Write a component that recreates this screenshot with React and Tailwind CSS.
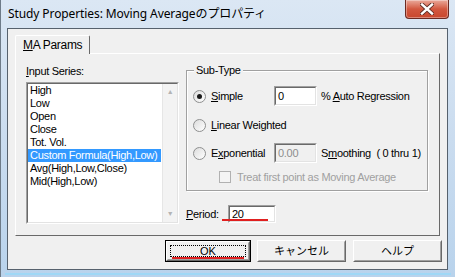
import React from 'react';

const items = [
  'High',
  'Low',
  'Open',
  'Close',
  'Tot. Vol.',
  'Custom Formula(High,Low)',
  'Avg(High,Low,Close)',
  'Mid(High,Low)',
];

// sunken classic edit box
const Sunken = ({ className = '', inner = '', children }) => (
  <div className={`border border-t-[#a0a0a0] border-l-[#a0a0a0] border-r-white border-b-white ${className}`}>
    <div className={`h-full border border-t-[#696969] border-l-[#696969] border-r-[#e3e3e3] border-b-[#e3e3e3] ${inner}`}>
      {children}
    </div>
  </div>
);

const Radio = ({ checked }) => (
  <div className="w-[13px] h-[13px] rounded-full border border-[#8e8f8f] bg-gradient-to-br from-[#dcdcdc] to-white flex items-center justify-center shrink-0">
    {checked && <div className="w-[5px] h-[5px] rounded-full bg-[#1a1a1a]" />}
  </div>
);

const Button = ({ children, def, className = '' }) => (
  <div className={`h-[22px] ${def ? 'border border-black' : ''} ${className}`}>
    <div className="h-full border border-t-white border-l-white border-r-[#696969] border-b-[#696969] bg-[#f0f0f0]">
      <div className="h-full border border-t-[#f0f0f0] border-l-[#f0f0f0] border-r-[#a0a0a0] border-b-[#a0a0a0] flex items-center justify-center p-[2px]">
        <div className={`w-full h-full flex items-center justify-center ${def ? 'border border-dotted border-black' : ''}`}>
          {children}
        </div>
      </div>
    </div>
  </div>
);

export default function App() {
  return (
    <div className="w-[455px] h-[277px] flex flex-col bg-gradient-to-b from-[#dbe7f4] via-[#cadcef] to-[#b9d3ec] border-l border-[#6e7b88] font-['Liberation_Sans','Noto_Sans_CJK_JP',sans-serif] text-[11px] text-black tracking-[-0.3px] overflow-hidden">
      {/* title bar */}
      <div className="h-[28px] flex items-start shrink-0">
        <div className="pl-[7px] pt-[6px] text-[12px] leading-[16px] tracking-[-0.1px] font-['Noto_Sans','Noto_Sans_CJK_JP',sans-serif] text-black flex-1">
          Study Properties: Moving Averageのプロパティ
        </div>
        <div className="w-[44px] h-[19px] mr-[6px] rounded-b-[4px] border border-t-0 border-[#6b2a22] bg-gradient-to-b from-[#e9a99b] via-[#d2573f] to-[#c8472d] flex items-center justify-center shadow-[inset_0_0_0_1px_rgba(255,255,255,0.35)]">
          <svg width="14" height="12" viewBox="0 0 14 12">
            <path d="M2 1.5 L12 10.5 M12 1.5 L2 10.5" stroke="#5a2a22" strokeWidth="4.2" strokeLinecap="square" />
            <path d="M2 1.5 L12 10.5 M12 1.5 L2 10.5" stroke="#ffffff" strokeWidth="2.4" strokeLinecap="square" />
          </svg>
        </div>
      </div>

      {/* client area */}
      <div className="mx-[6px] w-[441px] h-[242px] border border-[#56616d] bg-[#f0f0f0] flex flex-col shrink-0">
        {/* tab header */}
        <div className="pl-[7px] pt-[6px] flex">
          <div className="w-[75px] h-[19px] border border-b-0 border-t-white border-l-white border-r-[#696969] rounded-tl-[2px] rounded-tr-[2px] flex items-center pl-[7px] text-[12px] leading-[14px] -mb-px relative bg-[#f0f0f0]">
            <span className="underline underline-offset-[1px]">M</span>A Params
          </div>
        </div>

        {/* tab panel */}
        <div className="ml-[7px] w-[425px] h-[183px] border border-t-white border-l-white border-r-[#696969] border-b-[#696969] flex">
          {/* input series */}
          <div className="pl-[10px] pt-[10px] flex flex-col">
            <div className="leading-[14px] h-[14px]">
              <span className="underline underline-offset-[1px]">I</span>nput Series:
            </div>
            <Sunken className="mt-[4px] w-[153px] h-[142px]" inner="bg-white flex">
              <div className="flex-1 flex flex-col">
                {items.map((t, i) => (
                  <div
                    key={i}
                    className={`h-[13px] leading-[13px] pl-[2px] whitespace-nowrap ${i === 5 ? 'bg-[#3399ff] text-white w-[133px]' : ''}`}
                  >
                    {t}
                  </div>
                ))}
              </div>
              <div className="w-[15px] bg-[#f3f3f3] border-l border-[#e6e6e6] flex flex-col justify-between items-center py-[4px] text-[7px] leading-[8px] text-[#b4b4b4]">
                <span>▲</span>
                <span>▼</span>
              </div>
            </Sunken>
          </div>

          {/* sub-type + period */}
          <div className="ml-[7px] pt-[16px] flex flex-col">
            <div className="w-[242px] h-[121px] border border-[#a0a0a0] shadow-[inset_1px_1px_0_#fff,1px_1px_0_#fff] flex flex-col">
              <div className="-mt-[8px] ml-[7px] w-fit px-[2px] bg-[#f0f0f0] leading-[14px] h-[14px]">Sub-Type</div>

              <div className="mt-[9px] h-[20px] flex items-center pl-[6px]">
                <Radio checked />
                <div className="ml-[5px] w-[63px]">
                  <span className="underline underline-offset-[1px]">S</span>imple
                </div>
                <Sunken className="w-[43px] h-[20px]" inner="bg-white flex items-center pl-[2px]">0</Sunken>
                <div className="ml-[4px]">
                  % <span className="underline underline-offset-[1px]">A</span>uto Regression
                </div>
              </div>

              <div className="mt-[9px] h-[20px] flex items-center pl-[6px]">
                <Radio />
                <div className="ml-[5px]">
                  <span className="underline underline-offset-[1px]">L</span>inear Weighted
                </div>
              </div>

              <div className="mt-[8px] h-[20px] flex items-center pl-[6px]">
                <Radio />
                <div className="ml-[5px] w-[63px]">
                  E<span className="underline underline-offset-[1px]">x</span>ponential
                </div>
                <Sunken className="w-[43px] h-[20px]" inner="bg-[#f0f0f0] text-[#8d8d8d] flex items-center pl-[2px]">0.00</Sunken>
                <div className="ml-[4px]">
                  S<span className="underline underline-offset-[1px]">m</span>oothing&nbsp; ( 0 thru 1)
                </div>
              </div>

              <div className="mt-[8px] h-[12px] flex items-center pl-[32px]">
                <div className="w-[12px] h-[12px] border border-[#b1b1b1] bg-[#f4f4f4] shrink-0" />
                <div className="ml-[6px] text-[#a0a0a0]">Treat first point as Moving Average</div>
              </div>
            </div>

            <div className="mt-[14px] h-[18px] flex items-center relative">
              <div className="w-[42px]">
                <span className="underline underline-offset-[1px]">P</span>eriod:
              </div>
              <Sunken className="w-[48px] h-[18px]" inner="bg-white flex items-center pl-[2px]">20</Sunken>
              <div className="absolute left-[36px] top-[14px] w-[46px] h-[2px] bg-[#e02020]" />
            </div>
          </div>
        </div>

        {/* buttons */}
        <div className="mt-[4px] flex justify-end pr-[5px] tracking-normal">
          <Button def className="w-[86px] relative">
            OK
            <div className="absolute left-[6px] top-[16px] w-[72px] h-[2px] bg-[#e02020]" />
          </Button>
          <Button className="ml-[6px] w-[89px]">キャンセル</Button>
          <Button className="ml-[7px] w-[89px]">ヘルプ</Button>
        </div>
      </div>

      {/* bottom frame */}
      <div className="mt-[3px] mx-[4px] h-[2px] bg-[#9fd8f6]" />
    </div>
  );
}
